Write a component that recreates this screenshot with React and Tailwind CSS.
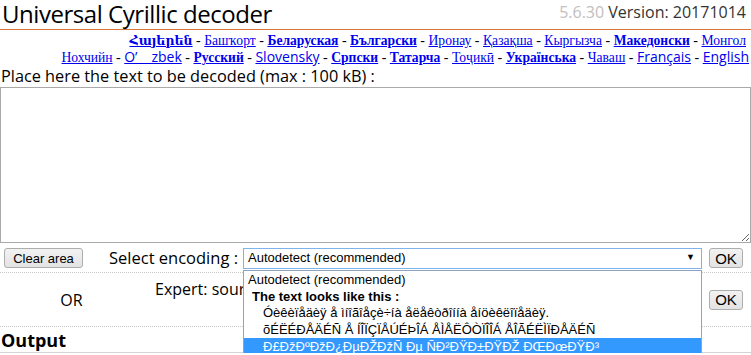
const serif = 'font-["Liberation_Serif","DejaVu_Serif",serif]';
const sans = 'font-["Open_Sans","Noto_Sans",sans-serif]';

const row1 = [
  { t: 'Հայերեն', k: 'a' },
  { t: 'Башҡорт', k: 's' },
  { t: 'Беларуская', k: 'b' },
  { t: 'Български', k: 'b' },
  { t: 'Иронау', k: 's' },
  { t: 'Қазақша', k: 's' },
  { t: 'Кыргызча', k: 's' },
  { t: 'Македонски', k: 'b' },
  { t: 'Монгол', k: 's' },
];

const row2 = [
  { t: 'Нохчийн', k: 's' },
  { t: 'O’\u2003zbek', k: 'x' },
  { t: 'Русский', k: 'b' },
  { t: 'Slovensky', k: 'x' },
  { t: 'Српски', k: 'b' },
  { t: 'Татарча', k: 'b' },
  { t: 'Тоҷикӣ', k: 's' },
  { t: 'Українська', k: 'b' },
  { t: 'Чаваш', k: 's' },
  { t: 'Français', k: 'x' },
  { t: 'English', k: 'x' },
];

const linkClass = (k) => {
  if (k === 'a') return 'font-["DejaVu_Serif","Liberation_Serif",serif] font-bold text-[12.5px]';
  if (k === 'b') return 'font-["Liberation_Serif","DejaVu_Serif",serif] font-bold text-[13.6px]';
  if (k === 's') return 'font-["Liberation_Serif","DejaVu_Serif",serif] text-[13.6px]';
  return 'font-["Open_Sans","Noto_Sans",sans-serif] text-[14px]';
};

const LangRow = ({ items }) => (
  <div className="h-[17px] whitespace-nowrap text-right leading-[17px]">
    {items.map((it, i) => (
      <span key={it.t}>
        {i > 0 && <span className={`${serif} text-[14px]`}> - </span>}
        <a href="#" className={`${linkClass(it.k)} text-[#0000ee] underline`}>
          {it.t}
        </a>
      </span>
    ))}
  </div>
);

const Btn = ({ children, className = '' }) => (
  <button
    type="button"
    className={`h-[20px] shrink-0 rounded-[3px] border border-[#adadad] bg-gradient-to-b from-[#f2f2f2] to-[#e3e3e3] font-["Liberation_Sans",Arial,sans-serif] text-[13px] leading-none text-black ${className}`}
  >
    {children}
  </button>
);

export default function App() {
  return (
    <div className={`relative w-[751px] overflow-hidden bg-white text-black ${sans}`}>
      <div className="flex h-[30px] items-end justify-between border-b border-[#d9773a]">
        <h1 className="pl-[2px] text-[24px] leading-[30px] tracking-[-0.45px]">Universal Cyrillic decoder</h1>
        <div className="self-start pr-[5px] pt-[1px] text-[16px] leading-[22px]">
          <span className="text-[#c0c0c0]">5.6.30</span> <span className="text-[#333]">Version: 20171014</span>
        </div>
      </div>

      <div className="pr-[5px] pt-[1px]">
        <LangRow items={row1} />
        <div className="-mr-[3px]">
          <LangRow items={row2} />
        </div>
      </div>

      <div className="h-[22px] pl-[1px] text-[16.3px] leading-[22px]">Place here the text to be decoded (max : 100 kB) :</div>

      <textarea className="block h-[156px] w-full resize-y border border-[#a9a9a9] p-1 outline-none" />

      <div className="flex h-[30px] items-center border-b border-dotted border-[#c8c8c8] pt-[1px]">
        <Btn className="ml-[4px] w-[79px]">Clear area</Btn>
        <div className="w-[160px] shrink-0 pr-[5px] text-right text-[16.5px] leading-none">Select encoding :</div>
        <div className="flex h-[21px] w-[459px] shrink-0 items-center justify-between border border-[#7eb4ea] pl-[4px] pr-[6px] font-['Liberation_Sans',Arial,sans-serif] text-[13px]">
          <span>Autodetect (recommended)</span>
          <span className="text-[9px]">▼</span>
        </div>
        <Btn className="ml-[7px] w-[34px] text-[15px]">OK</Btn>
      </div>

      <div className="flex h-[54px] border-b border-dotted border-[#c8c8c8]">
        <div className="flex w-[143px] items-center justify-center text-[16px]">OR</div>
        <div className="mt-[6px] ml-[12px] w-[554px] text-[16px] leading-[20px]">
          Expert: source encoding
        </div>
        <div className="flex items-center">
          <Btn className="w-[34px] text-[15px]">OK</Btn>
        </div>
      </div>

      <div className="h-[26px] border-b border-[#d4d4d4] pl-[1px] text-[18px] font-bold leading-[26px]">Output</div>

      <div className="absolute left-[243px] top-[270px] w-[459px] border border-[#8ea4c0] bg-white font-['Liberation_Sans',Arial,sans-serif] text-[13px] leading-[17px]">
        <div className="h-[17px] pl-[4px]">Autodetect (recommended)</div>
        <div className="h-[17px] pl-[8px] font-bold">The text looks like this :</div>
        <div className="h-[16px] pl-[19px] leading-[16px]">Óèêèïåäèÿ å ìíîãîåçè÷íà åëåêòðîííà åíöèêëîïåäèÿ.</div>
        <div className="h-[17px] pl-[19px]">õÉËÉÐÅÄÉÑ Å ÍÎÏÇÏÅÚÉÞÎÁ ÅÌÅËÔÒÏÎÎÁ ÅÎÃÉËÌÏÐÅÄÉÑ</div>
        <div className="h-[17px] bg-[#3399ff] pl-[19px] text-white">Ð£ÐžÐºÐžÐ¿ÐµÐŽÐžÑ Ðµ ÑÐ²ÐŸÐ±ÐŸÐŽ ÐŒÐœÐŸÐ³</div>
      </div>
    </div>
  );
}
